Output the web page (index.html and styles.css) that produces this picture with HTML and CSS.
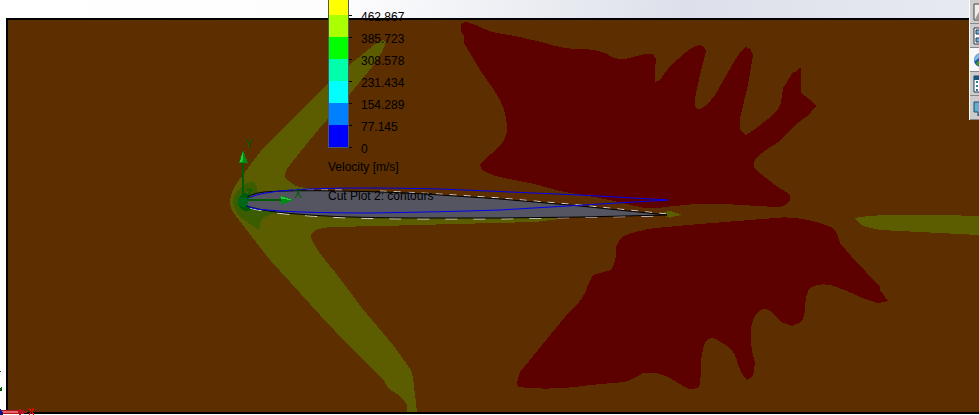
FILE: index.html
```html
<!DOCTYPE html>
<html lang="en">
<head>
<meta charset="utf-8">
<title>Flow simulation – cut plot</title>
<link rel="stylesheet" href="styles.css">
</head>
<body>
<main class="viewport">
  <svg class="scene" viewBox="0 0 979 415" role="img" aria-label="Velocity contours around an airfoil">
    <rect class="frame" x="6" y="18" width="980" height="396"/>
    <rect class="field" x="8" y="20" width="980" height="392"/>
    <path class="olive" d="M386 42L383 40L375 44L358 58L340 72L300 111L260 152L242 176Q230 191 230 202Q230 209 236 216L245 228L270 260L320 315L350 347L384 380Q387 389 394 392Q402 396 407 405V412H417L413 378L411 370L393 345L362 308L335 272Q318 253 311 238V234Q315 228 331 227L380 226L455 224L535 222L560 219L500 210L310 195V189L296 186L286 179Q283 173 290 165L300 152L319 129L350 94L372 67L382 52Z"/>
    <path class="olive" d="M664 212L670 211L676 213L683 215L675 216L670 218L665 216Z"/>
    <path class="olive" d="M854 218L869 216L885 215H943L979 216V235L940 233L880 230Q862 227 858 222Z"/>
    <path class="moss" d="M253 181Q240 184 234 196Q231 207 240 217L259 230L261 221Q264 215 280 212L250 205L258 195L257 187Z"/>
    <path class="green" d="M244 193Q237 197 238 204Q240 211 248 211L256 208L244 201L252 195Z"/>
    <path class="red" d="M461 24V31L464 36V43L480 70L494 90Q507 109 507 128Q507 140 497 149L484 160L480 165L482 170Q491 176 510 179L534 184L560 191L605 199L640 207Q650 210 665 207L695 204H725L775 207Q785 207 788 203Q792 200 789 194L775 185L757 171Q751 165 756 158Q761 153 777 143L795 125L810 114L812 110L816 106L812 101L802 94L801 91V68L799 68L796 72H793L787 82L783 88L781 103Q779 109 772 116L755 129L746 135L740 130V118L748 85L753 55L750 48L748 49L746 47Q740 51 735 60L715 95Q704 110 697 109L695 106V98L700 75L706 51L704 47L700 45Q690 47 678 59Q668 67 660 80L655 82V70L656 59L653 54H645L625 59Q615 60 607 54Q596 49 580 49Q563 49 545 43L520 37L492 32Q484 29 478 26L466 22L462 23Z"/>
    <path class="red" d="M775 218L700 224L655 228Q635 231 624 236Q616 241 616 251Q616 263 611 270L600 273L593 275L588 285Q585 295 579 302L565 317L520 372L517 383L518 387Q550 391 590 385L625 382Q636 378 643 373Q655 371 668 377L685 387Q692 391 699 387Q701 381 701 360L704 345Q707 336 716 339L730 348Q735 353 737 361Q740 373 747 380L753 376L755 363Q748 338 752 324Q754 315 760 310Q768 307 773 314L783 323L792 326L801 322Q805 318 805 305Q807 290 810 288Q818 283 830 285Q844 289 862 298L878 303L888 301L880 290V287L866 272L857 263L840 243Q838 233 833 228Q819 222 812 221Q791 216 775 218Z"/>
    <path class="foil" d="M243 201Q248 194 264 192Q290 190 340 191Q400 192 440 195L500 199L580 206L667 215L580 217L500 218H430Q350 218 310 215Q265 212 250 207Z"/>
    <path class="glint" d="M293 190H349M380 191Q430 193 500 198L580 205L667 214"/>
    <path class="glint glint-lower" d="M250 208Q265 213 310 216Q350 219 430 219H500L660 216"/>
    <path class="foil-edge" d="M667 215L580 206L500 199L440 195Q400 192 340 191Q290 190 264 192Q248 194 243 201Q243 205 250 207Q265 212 310 215Q350 218 430 218H500L580 217L667 215"/>
    <path class="blue" d="M668 200L580 195L440 189Q360 187 310 189Q255 191 243 201Q244 207 257 209Q290 213 370 213Q440 212 500 210L668 200"/>
    <path class="axis" d="M243 201V162M243 200H282"/>
    <circle class="origin" cx="243" cy="202" r="5"/>
    <path class="arrow" d="M243 150L248 163H239ZM293 200L281 205V195Z"/>
    <path class="arrow-light" d="M243 151V161L240 162ZM292 200L281 199V196Z"/>
    <text class="axis-label" x="245" y="148">Y</text>
    <text class="axis-label" x="294" y="198">X</text>
    <text class="axis-label" x="245" y="198">Z</text>
    <path class="triad-green" d="M0 371H1V372H0ZM0 388H1V387H2V391H0Z"/>
    <path class="triad-shaft" d="M2 410H19V414H2Z"/>
    <path class="triad-light" d="M2 411H18V413H2Z"/>
    <path class="triad-shaft" d="M19 409L28 412L19 415Z"/>
    <path class="triad-blue" d="M0 409Q3 410 3 415H0Z"/>
    <path class="triad-x" d="M29 408L34 415M34 408L29 415"/>
  </svg>

  <section class="legend" aria-label="Velocity legend">
    <ol class="scale">
      <li class="step yellow"><span class="value">462.867</span></li>
      <li class="step lime"><span class="value">385.723</span></li>
      <li class="step pure-green"><span class="value">308.578</span></li>
      <li class="step mint"><span class="value">231.434</span></li>
      <li class="step cyan"><span class="value">154.289</span></li>
      <li class="step azure"><span class="value">77.145</span></li>
      <li class="step pure-blue"><span class="value">0</span></li>
    </ol>
    <p class="caption">Velocity [m/s]</p>
    <p class="caption">Cut Plot 2: contours</p>
  </section>

  <nav class="task-pane" aria-label="Task pane">
    <button class="tab" aria-label="Resources"><svg viewBox="0 0 16 24"><path d="M1 4H15V20H1Z" fill="#eee" stroke="#444"/><path d="M2 19L8 8V19Z" fill="#999"/></svg></button>
    <button class="tab" aria-label="Library"><svg viewBox="0 0 16 24"><path d="M1 4H15V20H1Z" fill="#fff" stroke="#334"/><path d="M3 6H8V10H3ZM3 14H8V18H3Z" fill="#6ab4dc" stroke="#123c58"/></svg></button>
    <button class="tab active" aria-label="Appearances"><svg viewBox="0 0 16 24"><circle cx="8" cy="12" r="7" fill="#2454b0"/><path d="M1 12Q2 6 8 5L6 10L2 13Z" fill="#77bde8"/><path d="M3 15L8 11V19Q4 18 3 15Z" fill="#38a018"/></svg></button>
    <button class="tab" aria-label="Properties"><svg viewBox="0 0 16 24"><path d="M1 4H15V20H1Z" fill="#fff" stroke="#123c58"/><path d="M1 4H15V8H1Z" fill="#17587c"/><path d="M3 9H5V11H3ZM3 13H5V15H3ZM3 17H5V19H3ZM6 9H14V11H6ZM6 13H14V15H6ZM6 17H14V19H6Z" fill="#2c789f"/></svg></button>
    <button class="tab" aria-label="Forum"><svg viewBox="0 0 16 24"><path d="M1 6H15V16H8L5 20V16H1Z" fill="#64add0" stroke="#174e70"/></svg></button>
  </nav>
</main>
</body>
</html>
```
FILE: styles.css
```css
* { box-sizing: border-box; }

body {
  margin: 0;
  font-family: "Liberation Sans", Arial, sans-serif;
  font-size: 12px;
  line-height: 14px;
  color: #000;
}

.viewport {
  position: relative;
  min-height: 100vh;
  overflow: hidden;
  background: linear-gradient(100deg, #fff 0%, #fdfdfe 35%, #dde0ea 70%, #e8eaf1 100%) top / 100% 18px no-repeat #fff;
}

.scene { display: block; width: 100%; height: auto; shape-rendering: crispEdges; }
.frame { fill: #000; }
.field { fill: #5c2e00; }
.olive { fill: #5c5c00; }
.moss { fill: #3c5c00; }
.green { fill: #005c00; }
.red { fill: #5c0000; }
.foil { fill: #555562; }
.foil-edge { fill: none; stroke: #000; stroke-width: 1; shape-rendering: auto; }
.glint { fill: none; stroke: #d8d8e0; stroke-width: 1; stroke-dasharray: 7 7; shape-rendering: auto; }
.glint-lower { stroke-dasharray: 12 16; }
.blue { fill: none; stroke: #0000f0; stroke-width: 1; shape-rendering: auto; }
.axis { fill: none; stroke: #005c00; stroke-width: 2; }
.origin { fill: #006818; }
.arrow { fill: #008c10; }
.arrow-light { fill: #28c840; }
.axis-label { fill: #005c00; font-size: 12px; }
.triad-green { fill: #006000; }
.triad-shaft { fill: #b01820; }
.triad-light { fill: #e86468; }
.triad-blue { fill: #101080; }
.triad-x { stroke: #f00; stroke-width: 1; }

.legend { position: absolute; top: 0; left: 328px; }

.scale {
  width: 21px;
  margin: 0;
  padding: 0;
  list-style: none;
  border: solid #555562;
  border-width: 0 1px 1px;
}

.step { position: relative; height: 22px; }
.step:first-child { height: 15px; }

.step::after {
  content: "";
  position: absolute;
  bottom: -1px;
  left: 20px;
  width: 3px;
  height: 1px;
  background: #000;
}

.value { position: absolute; bottom: -9px; left: 32px; }

.yellow { background: #ff0; }
.lime { background: #aaff00; }
.pure-green { background: #0f0; }
.mint { background: #00ffaa; }
.cyan { background: #0ff; }
.azure { background: #0080ff; }
.pure-blue { background: #00f; }

.caption { margin: 12px 0 15px; }

.task-pane {
  position: absolute;
  top: 0;
  right: 0;
  display: flex;
  flex-direction: column;
  width: 10px;
  overflow: hidden;
  border-left: 1px solid #fff;
  background: #ccc;
}

.tab {
  height: 24px;
  padding: 0 0 0 3px;
  border: 0;
  border-bottom: 1px solid #888;
  background: #ccc;
}

.tab.active { background: #f8f8f8; }
.tab svg { display: block; width: 16px; height: 24px; }
```
